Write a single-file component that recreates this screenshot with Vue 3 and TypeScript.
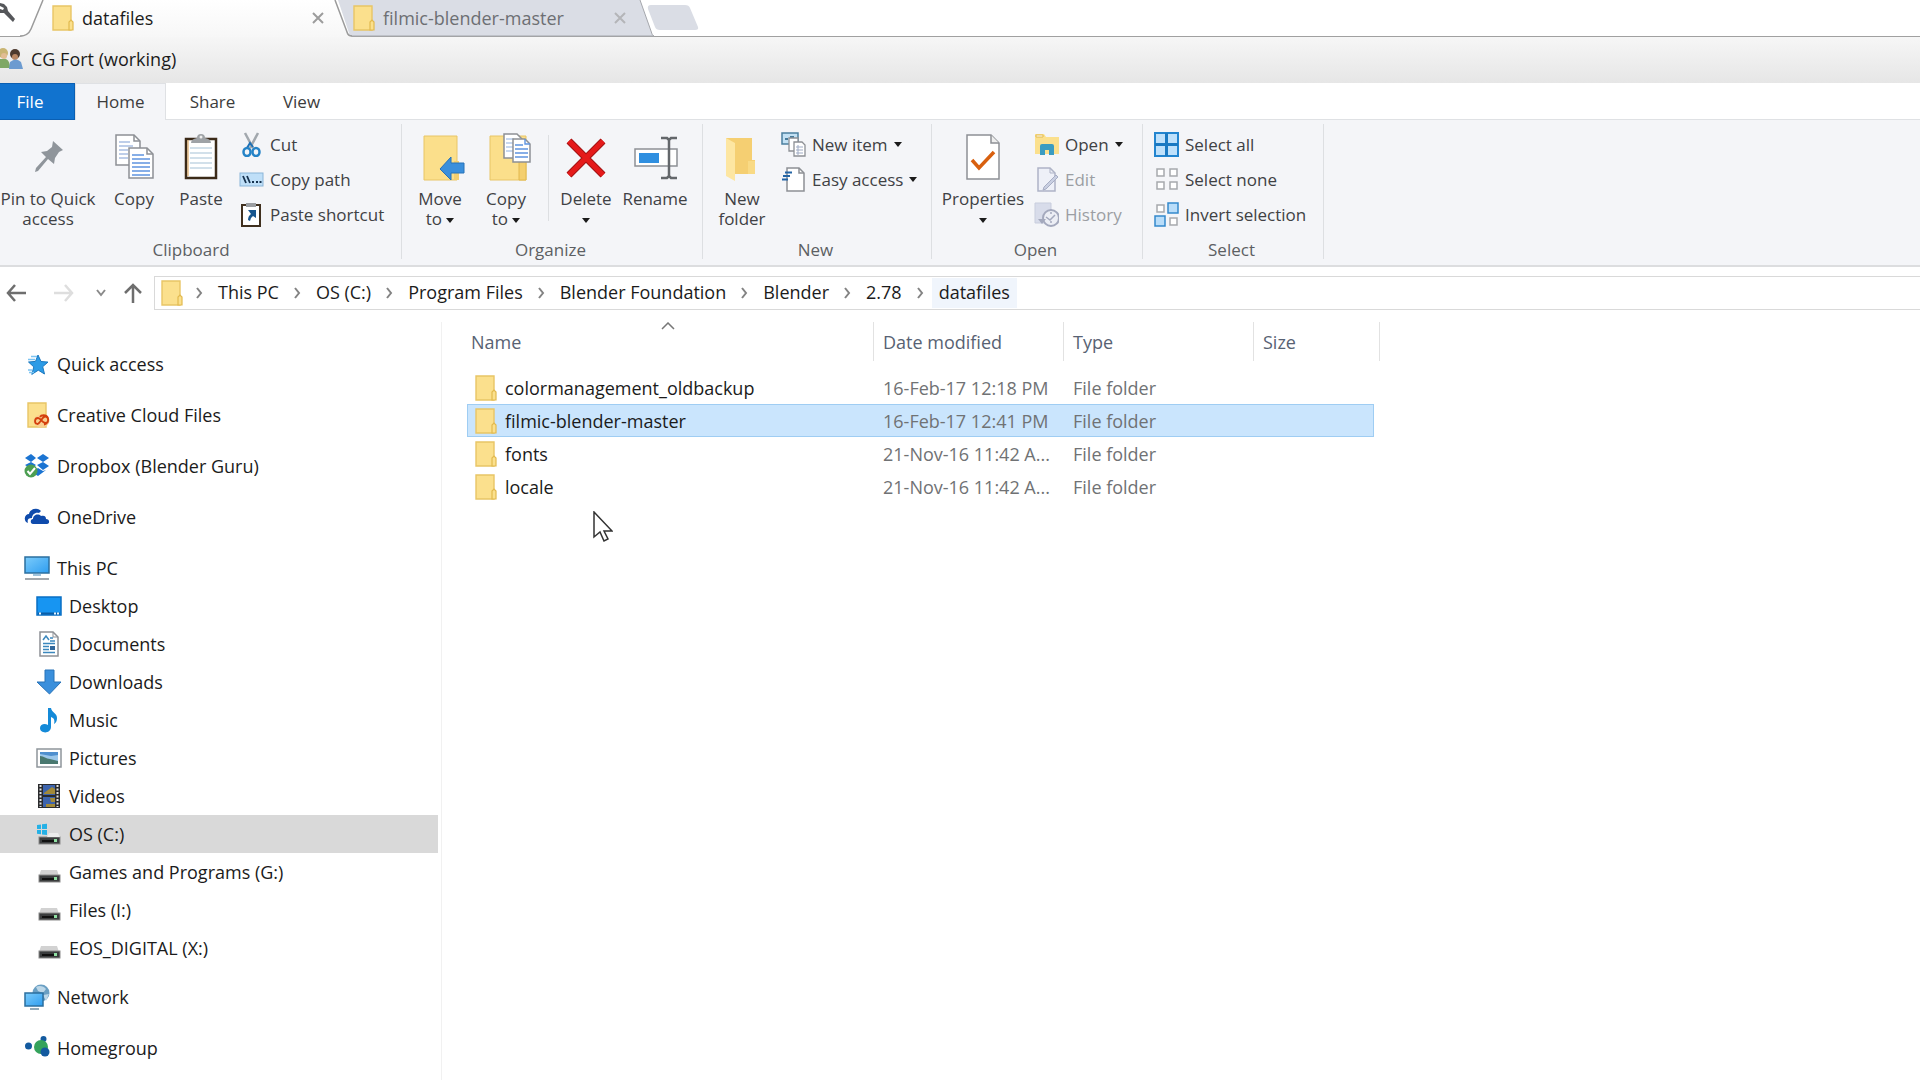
<script setup lang="ts">
import { ref } from 'vue'

interface Place {
  label: string
  icon: string
  child?: boolean
}

interface Entry {
  name: string
  modified: string
  type: string
  size: string
}

interface Command {
  label: string
  icon: string
  menu?: boolean
  disabled?: boolean
}

const page = '<path d="M1 1h13l5 5v18H1z" fill="#fff" stroke="#8d9095" stroke-width="1.5"/><path d="M14 1v5h5" fill="none" stroke="#8d9095" stroke-width="1.5"/>'

const drive =
  '<path d="M5 11h16l2 6H3z" fill="#d2d2d2"/><rect x="3" y="16" width="21" height="7" fill="#3a3c3d" stroke="#8b8b8b"/><path d="M6 20h12" stroke="#101010" stroke-width="2"/><rect x="18" y="18" width="3" height="3" fill="#8fe0a2"/>'

const icons: Record<string, string> = {
  folder:
    '<path d="M3 1h18v24H3z" fill="#fbe08d" stroke="#e8c566" stroke-width="1.4"/><path d="M19 25v-8l2-2 2 2v8z" fill="#fbe08d" stroke="#e2b94e" stroke-width="1.2"/>',
  quick:
    '<path d="M14 4l3 6.500 7 .6-5.300 4.600 1.800 7.300-6.200-3.800-6.500 4.200 2-7.500L4.500 11l7-.6z" fill="#2c9be6" stroke="#1b78bf"/><path d="M7 5.500h6M4 8.500h7M4 19h4M5 21.500h5" stroke="#7cc4f2" stroke-width="1.4"/>',
  creative:
    '<path d="M4 1h18v24H4z" fill="#fbe08d" stroke="#e8c566" stroke-width="1.4"/><ellipse cx="17.500" cy="19" rx="8" ry="6.500" fill="#f9cf90"/><path d="M13 22c-3-1-2.500-6 1-6 3 0 4 5 7.500 5 3.500 0 3.500-6 0-6.500-3.500-.4-5 7.500-8.500 7.500M16 15c1-2 6-3 8 1 1 3-1 6-4 6.500" fill="none" stroke="#d4400d" stroke-width="1.800"/>',
  dropbox:
    '<path d="M1 5l6-4 5 4-5 4zM13 5l6-4 6 4-6 4zM13 12l6-3 6 4-6 4zM9 18l5-3 5 3 3-1-8 6-5-3zM1 12l6-3 5 3-5 4z" fill="#1b74d2"/><circle cx="7" cy="18" r="6.500" fill="#4c9e52"/><path d="M3.500 18l2.500 3 5-6" fill="none" stroke="#fff" stroke-width="2"/>',
  onedrive:
    '<path d="M2 18c-3-4 0-8 3-8 1-5 8-7 12-3l-2 2c-4-1-7 2-7 5-4 0-5 2-4 5z" fill="#0f4bac"/><path d="M9 20c-3 0-3-5 0-5 0-4 5-6 8-3 4-1 5 1 5 3 4 0 4 5 1 5z" fill="#0f4bac"/>',
  pc:
    '<rect x="1" y="2" width="24" height="16" fill="url(#screen)" stroke="#2b6f9f" stroke-width="1.500"/><path d="M9 20h8" stroke="#9fc3dc" stroke-width="2"/><path d="M1 24h24" stroke="#a3a8ad" stroke-width="2"/>',
  desktop:
    '<rect x="1" y="4" width="24" height="18" fill="#1795f2" stroke="#0a6fc4" stroke-width="1.500"/><path d="M2 20.500h22" stroke="#0b5da6" stroke-width="2"/><path d="M3 20.500h2M18 20.500h2M21 20.500h2" stroke="#e4f4ff" stroke-width="2"/>',
  documents:
    '<path d="M4 1h13l5 5v19H4z" fill="#fff" stroke="#8d9095" stroke-width="1.500"/><path d="M17 1v5h5" fill="none" stroke="#8d9095"/><path d="M7 9l3-4 3 4M14 7h3M14 10h5M7 12.500h12M7 15.500h6M7 18.500h6M7 21.500h12" stroke="#3b87bd" stroke-width="1.500" fill="none"/><rect x="14" y="15" width="5" height="4" fill="#31679b"/>',
  downloads: '<path d="M9 1h9v12h7L13.500 25 1 13h8z" fill="#3a8fdc" stroke="#2772b8"/>',
  music:
    '<path d="M12 1h3c1 5 6 5 6 10 0 3-1 5-3 6 1-4 0-6-3-7v10c0 7-11 7-11 1 0-4 5-5 8-3z" fill="#148ad8"/>',
  pictures:
    '<rect x="1" y="4" width="24" height="18" fill="#fff" stroke="#8e959b" stroke-width="1.500"/><path d="M4 7h18v12H4z" fill="#9cc7ea"/><path d="M4 7h18v3l-7 1-11-2z" fill="#4f8fce"/><path d="M4 11c4 0 6 3 10 3l8 2v3H4z" fill="#49786f"/>',
  videos:
    '<rect x="2" y="1" width="22" height="24" fill="#2a2b2d"/><path d="M4.500 2v22M21.500 2v22" stroke="#e6e6e6" stroke-width="2" stroke-dasharray="2 1.500"/><path d="M7 2h12v10H7zM7 14h12v10H7z" fill="#3d64ad"/><path d="M8 10l4-3 4-3 3 2v5H8zM14 15h5v4h-4zM10 21h9v3h-9z" fill="#a28a39"/>',
  system:
    '<path d="M1 4l4-.6V8H1zM6 3.300l5-.6V8H6zM1 9h4v4.300l-4-.5zM6 9h5v5l-5-.6z" fill="#25b1e6"/><rect x="3" y="16" width="21" height="7" fill="#3a3c3d" stroke="#8b8b8b"/><path d="M13 12h9l2 4H11z" fill="#ececec"/><path d="M6 20h12" stroke="#101010" stroke-width="2"/><rect x="18" y="18" width="3" height="3" fill="#8fe0a2"/>',
  drive,
  network:
    '<circle cx="17" cy="9" r="8.500" fill="#6a9fc3"/><path d="M12 3c3-2 8-1 10 2l-3 4-5-2zM19 11l6-1-3 7z" fill="#bcd7e8"/><rect x="1" y="9" width="18" height="13" fill="url(#screen)" stroke="#2b6f9f" stroke-width="1.500"/><path d="M6 25h9" stroke="#93aab9" stroke-width="2"/>',
  homegroup:
    '<circle cx="4.500" cy="11" r="3.500" fill="#135a9f"/><circle cx="19.500" cy="4" r="3" fill="#135a9f"/><circle cx="17" cy="12" r="7" fill="#35a35c"/><circle cx="21" cy="17" r="4.500" fill="#135a9f"/>',
  cut:
    '<path d="M6 1l8 15M19 1l-8 15" stroke="#a2a8ae" stroke-width="2.500" fill="none"/><path d="M14 15l-3-4-3 5" stroke="#1d6fb4" stroke-width="2" fill="none"/><ellipse cx="8" cy="20" rx="3.500" ry="4" fill="none" stroke="#2583c7" stroke-width="2.500"/><ellipse cx="17" cy="20" rx="3.500" ry="4" fill="none" stroke="#2583c7" stroke-width="2.500"/>',
  path:
    '<rect x="1" y="6" width="23" height="13" fill="#bfdff8" stroke="#8ab5d8"/><path d="M4 9l3 7M8 9l3 7" stroke="#16324f" stroke-width="1.800"/><path d="M13 15h2M17 15h2M20.500 15h2" stroke="#16324f" stroke-width="2"/>',
  shortcut:
    '<rect x="3" y="3" width="18" height="21" fill="#fff" stroke="#40301f" stroke-width="2"/><path d="M7 1h10v4H7z" fill="#9a9da1"/><path d="M9 8h8v8l-3-2q-3 2-3 5l-2-1q0-4 3-6z" fill="#17568f"/>',
  item:
    '<rect x="1" y="1" width="16" height="11" fill="#c3e1f4" stroke="#4b7f9e" stroke-width="1.500"/><path d="M4 7h3M9 5h4" stroke="#477b9b" stroke-width="2"/><path d="M8 6h9v13H8z" fill="#fff" stroke="#8d9095" stroke-width="1.300"/><path d="M13 10h8l3 3v11H13z" fill="#fff" stroke="#8d9095" stroke-width="1.300"/><path d="M15 15h7M15 18h7M15 21h7M17 13v10" stroke="#9fabc4"/>',
  easy:
    '<path d="M6 1h12l5 5v18H6z" fill="#fff" stroke="#8d9095" stroke-width="1.500"/><path d="M18 1v5h5" fill="none" stroke="#8d9095" stroke-width="1.500"/><path d="M4 5.500h7M2 9h7M1 12.500h6" stroke="#2465a5" stroke-width="1.800"/>',
  open:
    '<path d="M1 2h9l2 3h13v17H1z" fill="#fbe08d"/><path d="M2 3h7v2H2z" fill="#fff" stroke="#e2bb51"/><path d="M6 23v-9q0-2 2-2h10q2 0 2 2v9h-5v-5h-4v5z" fill="#3b9cc1"/>',
  edit:
    '<path d="M4 1h12l5 5v18H4z" fill="#eef0f8" stroke="#aeb3c6" stroke-width="1.500"/><path d="M16 1v5h5" fill="none" stroke="#aeb3c6"/><path d="M22 8l2 2L12 22l-3 1 1-3z" fill="#c9cfe2" stroke="#a7adc4"/>',
  history:
    '<path d="M1 1h16v20H1z" fill="#d8dcea" stroke="#c8cddd"/><circle cx="17" cy="16" r="8" fill="#eceef5" stroke="#a4a9bd" stroke-width="2"/><path d="M12 15l4 3 5-5M17 10v2M17 21v-2" fill="none" stroke="#a4a9bd" stroke-width="1.500"/><path d="M4 17h8l-4 5z" fill="#a4a9bd"/>',
  all:
    '<path d="M1 1h23v23H1z" fill="#bfe1fb" stroke="#2385cf" stroke-width="2"/><path d="M12.500 1v23M1 12.500h23" stroke="#1a79c2" stroke-width="3"/>',
  none:
    '<path d="M3 2h7v7H3zM16 2h7v7h-7zM3 15h7v7H3zM16 15h7v7h-7z" fill="#fff" stroke="#a6a9ad" stroke-width="1.500"/>',
  invert:
    '<path d="M3 3h7v7H3zM16 16h7v7h-7z" fill="#fff" stroke="#a6a9ad" stroke-width="1.500"/><path d="M14 1h10v10H14zM1 14h10v10H1z" fill="#b9ddf9" stroke="#3489cc" stroke-width="1.500"/>'
}

const bigIcons: Record<string, string> = {
  pin: '<path d="M31 8l10 9-4 2-4 6-1 6-6-5-10 12-3 1 1-4 10-11-5-5 6-1 5-4z" fill="#8f959b"/>',
  copy:
    '<g transform="translate(5 1)"><path d="M1 1h18l6 6v24H1z" fill="#fff" stroke="#8d9095" stroke-width="1.500"/><path d="M19 1v6h6" fill="none" stroke="#8d9095" stroke-width="1.500"/></g><path d="M9 9h11M9 13h14M9 17h9M9 21h9M9 25h9" stroke="#a9bfe2" stroke-width="1.400"/><path d="M19 15h18l6 6v24H19z" fill="#fff" stroke="#8d9095" stroke-width="1.500"/><path d="M37 15v6h6" fill="none" stroke="#8d9095" stroke-width="1.500"/><path d="M22 22h12M22 26h18M22 30h18M22 34h18M22 38h18M22 42h18" stroke="#5f94e0" stroke-width="1.600"/>',
  paste:
    '<rect x="9" y="6" width="30" height="39" fill="#fff" stroke="#3b2a18" stroke-width="2.500"/><path d="M11 7v36" stroke="#d89b4c"/><path d="M13 15h22M13 20h22M13 25h22M13 30h22M13 35h22" stroke="#c4d6e3" stroke-width="1.500"/><path d="M14 10q0-4 6-5 0-4 4-4t4 4q6 1 6 5z" fill="#9ea2a6"/><circle cx="24" cy="4" r="1.500" fill="#eee"/>',
  move:
    '<path d="M10 3h33v44H10z" fill="#fbdf8b" stroke="#e8c566"/><path d="M40 28h5v19h-5z" fill="#f4cf6f"/><path d="M26 36l11-12v6h13v10H37v7z" fill="#3a8fdc" stroke="#2772b8"/>',
  copyto:
    '<path d="M10 3h36v44H10z" fill="#fbdf8b" stroke="#e8c566"/><path d="M39 28h7v19h-7z" fill="#f4cf6f" stroke="#e2b94e"/><path d="M24 1h13l5 5v19H24z" fill="#fff" stroke="#8d9095" stroke-width="1.500"/><path d="M26 6h8M26 10h8M26 14h8M26 18h8" stroke="#8fb0df"/><path d="M33 6h12l5 5v18H33z" fill="#fff" stroke="#8d9095" stroke-width="1.500"/><path d="M45 6v5h5M35 12h8M35 16h13M35 20h13M35 24h13" stroke="#5f94e0" stroke-width="1.400" fill="none"/>',
  remove: '<path d="M7 8l34 34M41 8L7 42" stroke="#a31212" stroke-width="7"/><path d="M7 8l34 34M41 8L7 42" stroke="#e51a1a" stroke-width="5"/>',
  rename:
    '<rect x="4" y="16" width="42" height="17" fill="#fff" stroke="#8d9095" stroke-width="1.500"/><rect x="8" y="20" width="20" height="10" fill="#2f8fe0"/><path d="M30 5h6l2 2 2-2h6M30 45h6l2-2 2 2h6M38 7v36" fill="none" stroke="#63676b" stroke-width="2.500"/>',
  newfolder:
    '<path d="M8 5h26v22h3v14H13z" fill="#f5cf72"/><path d="M8 5l9 5v38l-9-5z" fill="#fde6a2"/><path d="M30 28h7v13h-7z" fill="#f9da85"/>',
  properties:
    '<path d="M8 2h24l8 8v36H8z" fill="#fff" stroke="#8d9095" stroke-width="1.500"/><path d="M32 2v8h8" fill="#eee" stroke="#8d9095" stroke-width="1.500"/><path d="M13 27l7 8 15-16" fill="none" stroke="#d8600f" stroke-width="3.500"/>'
}

const clipboard: Command[] = [
  { label: 'Cut', icon: 'cut' },
  { label: 'Copy path', icon: 'path' },
  { label: 'Paste shortcut', icon: 'shortcut' }
]
const create: Command[] = [
  { label: 'New item', icon: 'item', menu: true },
  { label: 'Easy access', icon: 'easy', menu: true }
]
const opening: Command[] = [
  { label: 'Open', icon: 'open', menu: true },
  { label: 'Edit', icon: 'edit', disabled: true },
  { label: 'History', icon: 'history', disabled: true }
]
const selection: Command[] = [
  { label: 'Select all', icon: 'all' },
  { label: 'Select none', icon: 'none' },
  { label: 'Invert selection', icon: 'invert' }
]

const crumbs = ['This PC', 'OS (C:)', 'Program Files', 'Blender Foundation', 'Blender', '2.78', 'datafiles']

const places: Place[] = [
  { label: 'Quick access', icon: 'quick' },
  { label: 'Creative Cloud Files', icon: 'creative' },
  { label: 'Dropbox (Blender Guru)', icon: 'dropbox' },
  { label: 'OneDrive', icon: 'onedrive' },
  { label: 'This PC', icon: 'pc' },
  { label: 'Desktop', icon: 'desktop', child: true },
  { label: 'Documents', icon: 'documents', child: true },
  { label: 'Downloads', icon: 'downloads', child: true },
  { label: 'Music', icon: 'music', child: true },
  { label: 'Pictures', icon: 'pictures', child: true },
  { label: 'Videos', icon: 'videos', child: true },
  { label: 'OS (C:)', icon: 'system', child: true },
  { label: 'Games and Programs (G:)', icon: 'drive', child: true },
  { label: 'Files (I:)', icon: 'drive', child: true },
  { label: 'EOS_DIGITAL (X:)', icon: 'drive', child: true },
  { label: 'Network', icon: 'network' },
  { label: 'Homegroup', icon: 'homegroup' }
]

const entries: Entry[] = [
  { name: 'colormanagement_oldbackup', modified: '16-Feb-17 12:18 PM', type: 'File folder', size: '' },
  { name: 'filmic-blender-master', modified: '16-Feb-17 12:41 PM', type: 'File folder', size: '' },
  { name: 'fonts', modified: '21-Nov-16 11:42 A...', type: 'File folder', size: '' },
  { name: 'locale', modified: '21-Nov-16 11:42 A...', type: 'File folder', size: '' }
]

const currentPlace = ref('OS (C:)')
const selected = ref('filmic-blender-master')
</script>

<template>
  <div class="window">
    <svg class="defs" width="0" height="0" aria-hidden="true">
      <defs>
        <linearGradient id="screen" x1="0" y1="0" x2="1" y2="1">
          <stop offset="0" stop-color="#7cccfb" />
          <stop offset="1" stop-color="#2e9df0" />
        </linearGradient>
        <linearGradient id="front-tab" x1="0" y1="0" x2="0" y2="1">
          <stop offset="0" stop-color="#ffffff" />
          <stop offset="1" stop-color="#f7f7f7" />
        </linearGradient>
      </defs>
    </svg>

    <header class="caption">
      <div class="strip">
        <button class="wrench" aria-label="Settings">
          <svg width="18" height="24" viewBox="0 0 18 24"><path d="M0 3l4 1 3 3 1 4 7 8-2 3-9-9H0V9l3 1 1-2-4-2z" fill="#55575a" /></svg>
        </button>
        <div class="tab front">
          <svg class="shape" width="332" height="37" viewBox="0 0 332 37">
            <path d="M0 37L7 35 11 29 23 0H315L327 32 332 37z" fill="url(#front-tab)" />
            <path d="M0 36Q8 36 11 29L23 0M315 0L327 32Q328 36 332 36" fill="none" stroke="#9b9b9b" stroke-width="1.500" />
          </svg>
          <svg class="icon" width="26" height="26" v-html="icons.folder"></svg>
          <span class="tab-text">datafiles</span>
          <button class="close" aria-label="Close datafiles">
            <svg width="12" height="12" viewBox="0 0 12 12"><path d="M1 1l10 10M11 1L1 11" stroke="#9c9c9c" stroke-width="2" /></svg>
          </button>
        </div>
        <div class="tab back">
          <svg class="shape" width="316" height="37" viewBox="0 0 316 37">
            <path d="M0 0H302L313 31Q314 36 316 36H12Z" fill="#dadde5" />
            <path d="M12 36H316Q314 36 313 31L302 0" fill="none" stroke="#a5a7ac" />
          </svg>
          <svg class="icon" width="26" height="26" v-html="icons.folder"></svg>
          <span class="tab-text">filmic-blender-master</span>
          <button class="close" aria-label="Close filmic-blender-master">
            <svg width="12" height="12" viewBox="0 0 12 12"><path d="M1 1l10 10M11 1L1 11" stroke="#b4b5b8" stroke-width="2" /></svg>
          </button>
        </div>
        <button class="add" aria-label="New tab">
          <svg width="52" height="26" viewBox="0 0 52 26"><path d="M4 0H38Q42 0 43 3L51 22Q52 25 48 25H13Q9 25 8 22L1 4Q0 0 4 0z" fill="#dadde5" /></svg>
        </button>
      </div>
      <div class="bookmark">
        <svg width="23" height="22" viewBox="0 0 23 22">
          <circle cx="3" cy="5" r="5" fill="#c9b573" /><circle cx="4" cy="8" r="3" fill="#e2bd93" />
          <path d="M0 11h6q4 2 4 9H0z" fill="#7fa865" />
          <circle cx="15" cy="6" r="5" fill="#4d3a2e" /><circle cx="15" cy="9" r="3" fill="#b98763" />
          <path d="M10 14q6-5 11 0l2 7H9z" fill="#6c9bd0" />
        </svg>
        <span>CG Fort (working)</span>
      </div>
    </header>

    <nav class="menu" aria-label="Ribbon tabs">
      <button class="file">File</button>
      <button class="home">Home</button>
      <button class="share">Share</button>
      <button class="view">View</button>
    </nav>

    <section class="ribbon" aria-label="Ribbon">
      <div class="group g-clipboard">
        <div class="tools">
          <button class="big b-pin"><svg width="52" height="48" v-html="bigIcons.pin"></svg><span>Pin to Quick<br />access</span></button>
          <button class="big b-copy"><svg width="48" height="48" v-html="bigIcons.copy"></svg><span>Copy</span></button>
          <button class="big b-paste"><svg width="48" height="48" v-html="bigIcons.paste"></svg><span>Paste</span></button>
          <div class="stack">
            <button v-for="c in clipboard" :key="c.label" class="small">
              <svg width="25" height="25" v-html="icons[c.icon]"></svg><span>{{ c.label }}</span>
            </button>
          </div>
        </div>
        <div class="group-title">Clipboard</div>
      </div>

      <div class="group g-organize">
        <div class="tools">
          <button class="big b-move"><svg width="52" height="48" v-html="bigIcons.move"></svg><span>Move<br />to <i class="arrow"></i></span></button>
          <button class="big b-copyto"><svg width="52" height="48" v-html="bigIcons.copyto"></svg><span>Copy<br />to <i class="arrow"></i></span></button>
          <div class="rule"></div>
          <button class="big b-delete"><svg width="48" height="48" v-html="bigIcons.remove"></svg><span>Delete<br /><i class="arrow"></i></span></button>
          <button class="big b-rename"><svg width="48" height="48" v-html="bigIcons.rename"></svg><span>Rename</span></button>
        </div>
        <div class="group-title">Organize</div>
      </div>

      <div class="group g-new">
        <div class="tools">
          <button class="big b-new"><svg width="48" height="48" v-html="bigIcons.newfolder"></svg><span>New<br />folder</span></button>
          <div class="stack">
            <button v-for="c in create" :key="c.label" class="small">
              <svg width="25" height="25" v-html="icons[c.icon]"></svg><span>{{ c.label }}</span><i v-if="c.menu" class="arrow"></i>
            </button>
          </div>
        </div>
        <div class="group-title">New</div>
      </div>

      <div class="group g-open">
        <div class="tools">
          <button class="big b-props"><svg width="48" height="48" v-html="bigIcons.properties"></svg><span>Properties<br /><i class="arrow"></i></span></button>
          <div class="stack">
            <button v-for="c in opening" :key="c.label" class="small" :disabled="c.disabled">
              <svg width="25" height="25" v-html="icons[c.icon]"></svg><span>{{ c.label }}</span><i v-if="c.menu" class="arrow"></i>
            </button>
          </div>
        </div>
        <div class="group-title">Open</div>
      </div>

      <div class="group g-select">
        <div class="tools">
          <div class="stack">
            <button v-for="c in selection" :key="c.label" class="small">
              <svg width="25" height="25" v-html="icons[c.icon]"></svg><span>{{ c.label }}</span>
            </button>
          </div>
        </div>
        <div class="group-title">Select</div>
      </div>
    </section>

    <div class="address">
      <button class="nav n-back" aria-label="Back">
        <svg width="20" height="18" viewBox="0 0 20 18"><path d="M20 9H2M9 1L2 9l7 8" fill="none" stroke="#6e6e6e" stroke-width="2.500" /></svg>
      </button>
      <button class="nav n-forward" aria-label="Forward">
        <svg width="20" height="18" viewBox="0 0 20 18"><path d="M0 9h18M11 1l7 8-7 8" fill="none" stroke="#dedede" stroke-width="2.500" /></svg>
      </button>
      <button class="nav n-recent" aria-label="Recent locations">
        <svg width="10" height="8" viewBox="0 0 10 8"><path d="M1 1l4 5 4-5" fill="none" stroke="#8a8a8a" stroke-width="2" /></svg>
      </button>
      <button class="nav n-up" aria-label="Up">
        <svg width="18" height="20" viewBox="0 0 18 20"><path d="M9 20V2M1 10l8-8 8 8" fill="none" stroke="#6e6e6e" stroke-width="2.500" /></svg>
      </button>
      <div class="path">
        <svg class="path-icon" width="26" height="26" v-html="icons.folder"></svg>
        <template v-for="crumb in crumbs" :key="crumb">
          <svg class="chevron" width="23" height="12" viewBox="0 0 23 12"><path d="M9 1l4 5-4 5" fill="none" stroke="#838383" stroke-width="2" /></svg>
          <button class="crumb" :class="{ here: crumb === 'datafiles' }">{{ crumb }}</button>
        </template>
      </div>
    </div>

    <main class="body">
      <aside class="places">
        <a
          v-for="p in places"
          :key="p.label"
          href="#"
          class="place"
          :class="{ child: p.child, current: p.label === currentPlace }"
          @click.prevent="currentPlace = p.label"
        >
          <svg width="26" height="26" v-html="icons[p.icon]"></svg><span>{{ p.label }}</span>
        </a>
      </aside>

      <section class="files">
        <table>
          <colgroup>
            <col class="c-name" /><col class="c-date" /><col class="c-type" /><col class="c-size" /><col class="c-end" />
          </colgroup>
          <thead>
            <tr>
              <th class="h-name">
                Name
                <svg class="sort" width="14" height="8" viewBox="0 0 14 8"><path d="M1 7l6-6 6 6" fill="none" stroke="#777" stroke-width="1.500" /></svg>
              </th>
              <th>Date modified</th>
              <th>Type</th>
              <th colspan="2">Size</th>
            </tr>
          </thead>
          <tbody>
            <tr v-for="e in entries" :key="e.name" :class="{ selected: e.name === selected }" @click="selected = e.name">
              <td class="name"><div><svg width="26" height="26" v-html="icons.folder"></svg><span>{{ e.name }}</span></div></td>
              <td>{{ e.modified }}</td>
              <td>{{ e.type }}</td>
              <td class="size">{{ e.size }}</td>
              <td class="end"></td>
            </tr>
          </tbody>
        </table>
        <svg class="pointer" width="20" height="32" viewBox="0 0 20 32">
          <path d="M1 1v25l6-5 4 9 4-2-4-8h8z" fill="#fff" stroke="#333" stroke-width="1.500" />
        </svg>
      </section>
    </main>
  </div>
</template>

<style>
body {
  margin: 0;
  background: #fff;
}
</style>

<style scoped>
.window {
  min-height: 100vh;
  overflow: hidden;
  background: #fff;
  color: #1b1b1b;
  font: 18px/24px "Open Sans", "Noto Sans", sans-serif;
}
.defs {
  position: absolute;
}
button {
  margin: 0;
  padding: 0;
  border: 0;
  background: none;
  color: inherit;
  font: inherit;
  white-space: nowrap;
}
svg {
  flex: none;
}

.caption {
  background: linear-gradient(#fdfdfd, #f6f6f6 45%, #e6e6e6);
}
.strip {
  display: flex;
  height: 37px;
  background: #fff;
  box-shadow: inset 0 -1px #a0a0a0;
}
.wrench {
  display: flex;
  width: 27px;
}
.tab {
  position: relative;
  display: flex;
  align-items: center;
  box-sizing: border-box;
  padding: 0 21px 1px 23px;
}
.tab > * {
  position: relative;
}
.tab .shape {
  position: absolute;
  top: 0;
  left: -7px;
}
.front {
  z-index: 1;
  width: 318px;
}
.back {
  width: 302px;
  padding: 0 21px 1px 6px;
  color: #6d6f73;
}
.tab-text {
  flex: 1;
  margin-left: 6px;
}
.close {
  display: flex;
}
.add {
  display: flex;
  align-items: center;
  padding-bottom: 1px;
}
.bookmark {
  display: flex;
  align-items: center;
  gap: 8px;
  height: 44px;
  padding-bottom: 2px;
}

.menu {
  display: flex;
  height: 37px;
  box-shadow: inset 0 -1px #dfe1e4;
  font-size: 17px;
  color: #3c3c3c;
}
.menu button {
  box-sizing: border-box;
}
.menu .file {
  width: 75px;
  padding-right: 14px;
  border: 1px solid #0a5fb3;
  border-left: 0;
  background: #1173cf;
  color: #fff;
}
.menu .home {
  width: 91px;
  border: 1px solid #dfe1e4;
  border-bottom: 0;
  background: #f4f5f8;
}
.menu .share {
  width: 93px;
}
.menu .view {
  width: 85px;
}

.ribbon {
  display: flex;
  height: 135px;
  padding: 4px 0 6px;
  border-bottom: 2px solid #dcdddf;
  background: #f4f5f8;
  color: #3f4144;
  font-size: 17px;
}
.group {
  display: flex;
  flex: none;
  flex-direction: column;
  box-sizing: border-box;
  border-right: 1px solid #dddfe2;
}
.tools {
  display: flex;
  flex: 1;
  padding-top: 3px;
}
.group-title {
  height: 18px;
  padding-right: 3px;
  line-height: 18px;
  text-align: center;
  color: #5c5f63;
}
.g-clipboard {
  width: 418px;
  margin-left: -16px;
}
.g-clipboard .tools {
  padding-left: 16px;
}
.g-organize {
  width: 301px;
}
.g-organize .tools {
  padding-left: 6px;
}
.g-new {
  width: 229px;
}
.g-open {
  width: 211px;
}
.g-select {
  width: 181px;
}
.g-select .tools {
  padding-left: 11px;
}
.big {
  display: flex;
  flex: none;
  flex-direction: column;
  align-items: center;
  gap: 8px;
  padding-top: 6px;
  line-height: 20px;
}
.b-pin {
  width: 96px;
}
.b-copy {
  width: 76px;
}
.b-paste {
  width: 58px;
}
.b-move {
  width: 64px;
}
.b-copyto {
  width: 68px;
}
.b-delete {
  width: 74px;
}
.b-rename {
  width: 64px;
}
.b-new {
  width: 78px;
}
.b-props {
  width: 102px;
}
.rule {
  width: 1px;
  height: 86px;
  margin: 8px 0 0 8px;
  background: #dddfe2;
}
.stack {
  display: flex;
  flex-direction: column;
  align-items: flex-start;
}
.g-clipboard .stack {
  margin-left: 9px;
}
.small {
  display: flex;
  align-items: center;
  gap: 6px;
  height: 35px;
}
.small:disabled {
  color: #9b9ea3;
}
.arrow {
  display: inline-block;
  border: 4px solid transparent;
  border-top: 5px solid #1b1b1b;
  border-bottom: 0;
  vertical-align: middle;
}

.address {
  display: flex;
  align-items: center;
  padding-top: 9px;
}
.nav {
  display: flex;
  align-items: center;
  justify-content: center;
}
.n-back {
  width: 32px;
  margin-right: 8px;
}
.n-forward {
  width: 48px;
}
.n-recent {
  width: 26px;
}
.n-up {
  width: 38px;
  margin-right: 2px;
}
.path {
  display: flex;
  flex: 1;
  align-items: center;
  box-sizing: border-box;
  height: 34px;
  padding-left: 4px;
  border: 1px solid #d9d9d9;
  border-right: 0;
}
.path-icon {
  margin-right: 3px;
}
.crumb {
  height: 30px;
  padding: 0 7px 2px;
}
.here {
  background: #f0f5fc;
}

.body {
  display: flex;
  padding-top: 12px;
}
.places {
  display: flex;
  flex: none;
  flex-direction: column;
  width: 441px;
  padding: 23px 0 13px;
  border-right: 1px solid #f1f1f1;
}
.place {
  display: flex;
  align-items: center;
  gap: 7px;
  height: 38px;
  margin-right: 3px;
  padding-left: 24px;
  color: inherit;
  text-decoration: none;
}
.place.child {
  padding-left: 36px;
}
.place + .place:not(.child) {
  margin-top: 13px;
}
.child + .place:not(.child) {
  margin-top: 11px;
}
.current {
  background: #d9d9d9;
}

.files {
  position: relative;
  flex: 1;
  padding-left: 25px;
}
table {
  width: 913px;
  border-collapse: separate;
  border-spacing: 0;
  table-layout: fixed;
}
.c-name {
  width: 407px;
}
.c-date,
.c-type {
  width: 190px;
}
.c-size {
  width: 120px;
}
.c-end {
  width: 6px;
}
th {
  position: relative;
  height: 39px;
  padding: 0 0 0 9px;
  border-right: 1px solid #e2e2e2;
  color: #586273;
  font-weight: 400;
  text-align: left;
}
.h-name {
  padding-left: 4px;
}
.sort {
  position: absolute;
  top: 0;
  left: 194px;
}
tbody::before {
  content: "";
  display: block;
  height: 10px;
}
td {
  box-sizing: border-box;
  height: 33px;
  padding: 0 0 0 9px;
  border: 1px solid transparent;
  border-width: 1px 0;
  color: #707274;
  white-space: nowrap;
}
td.name {
  padding-left: 5px;
  border-left-width: 1px;
  color: #1b1b1b;
}
.name div {
  display: flex;
  align-items: center;
  gap: 6px;
}
td.size {
  border-right-width: 1px;
}
.selected td:not(.end) {
  border-color: #9fcdf3;
  background: #cae5fd;
}
.pointer {
  position: absolute;
  top: 189px;
  left: 151px;
}
</style>
